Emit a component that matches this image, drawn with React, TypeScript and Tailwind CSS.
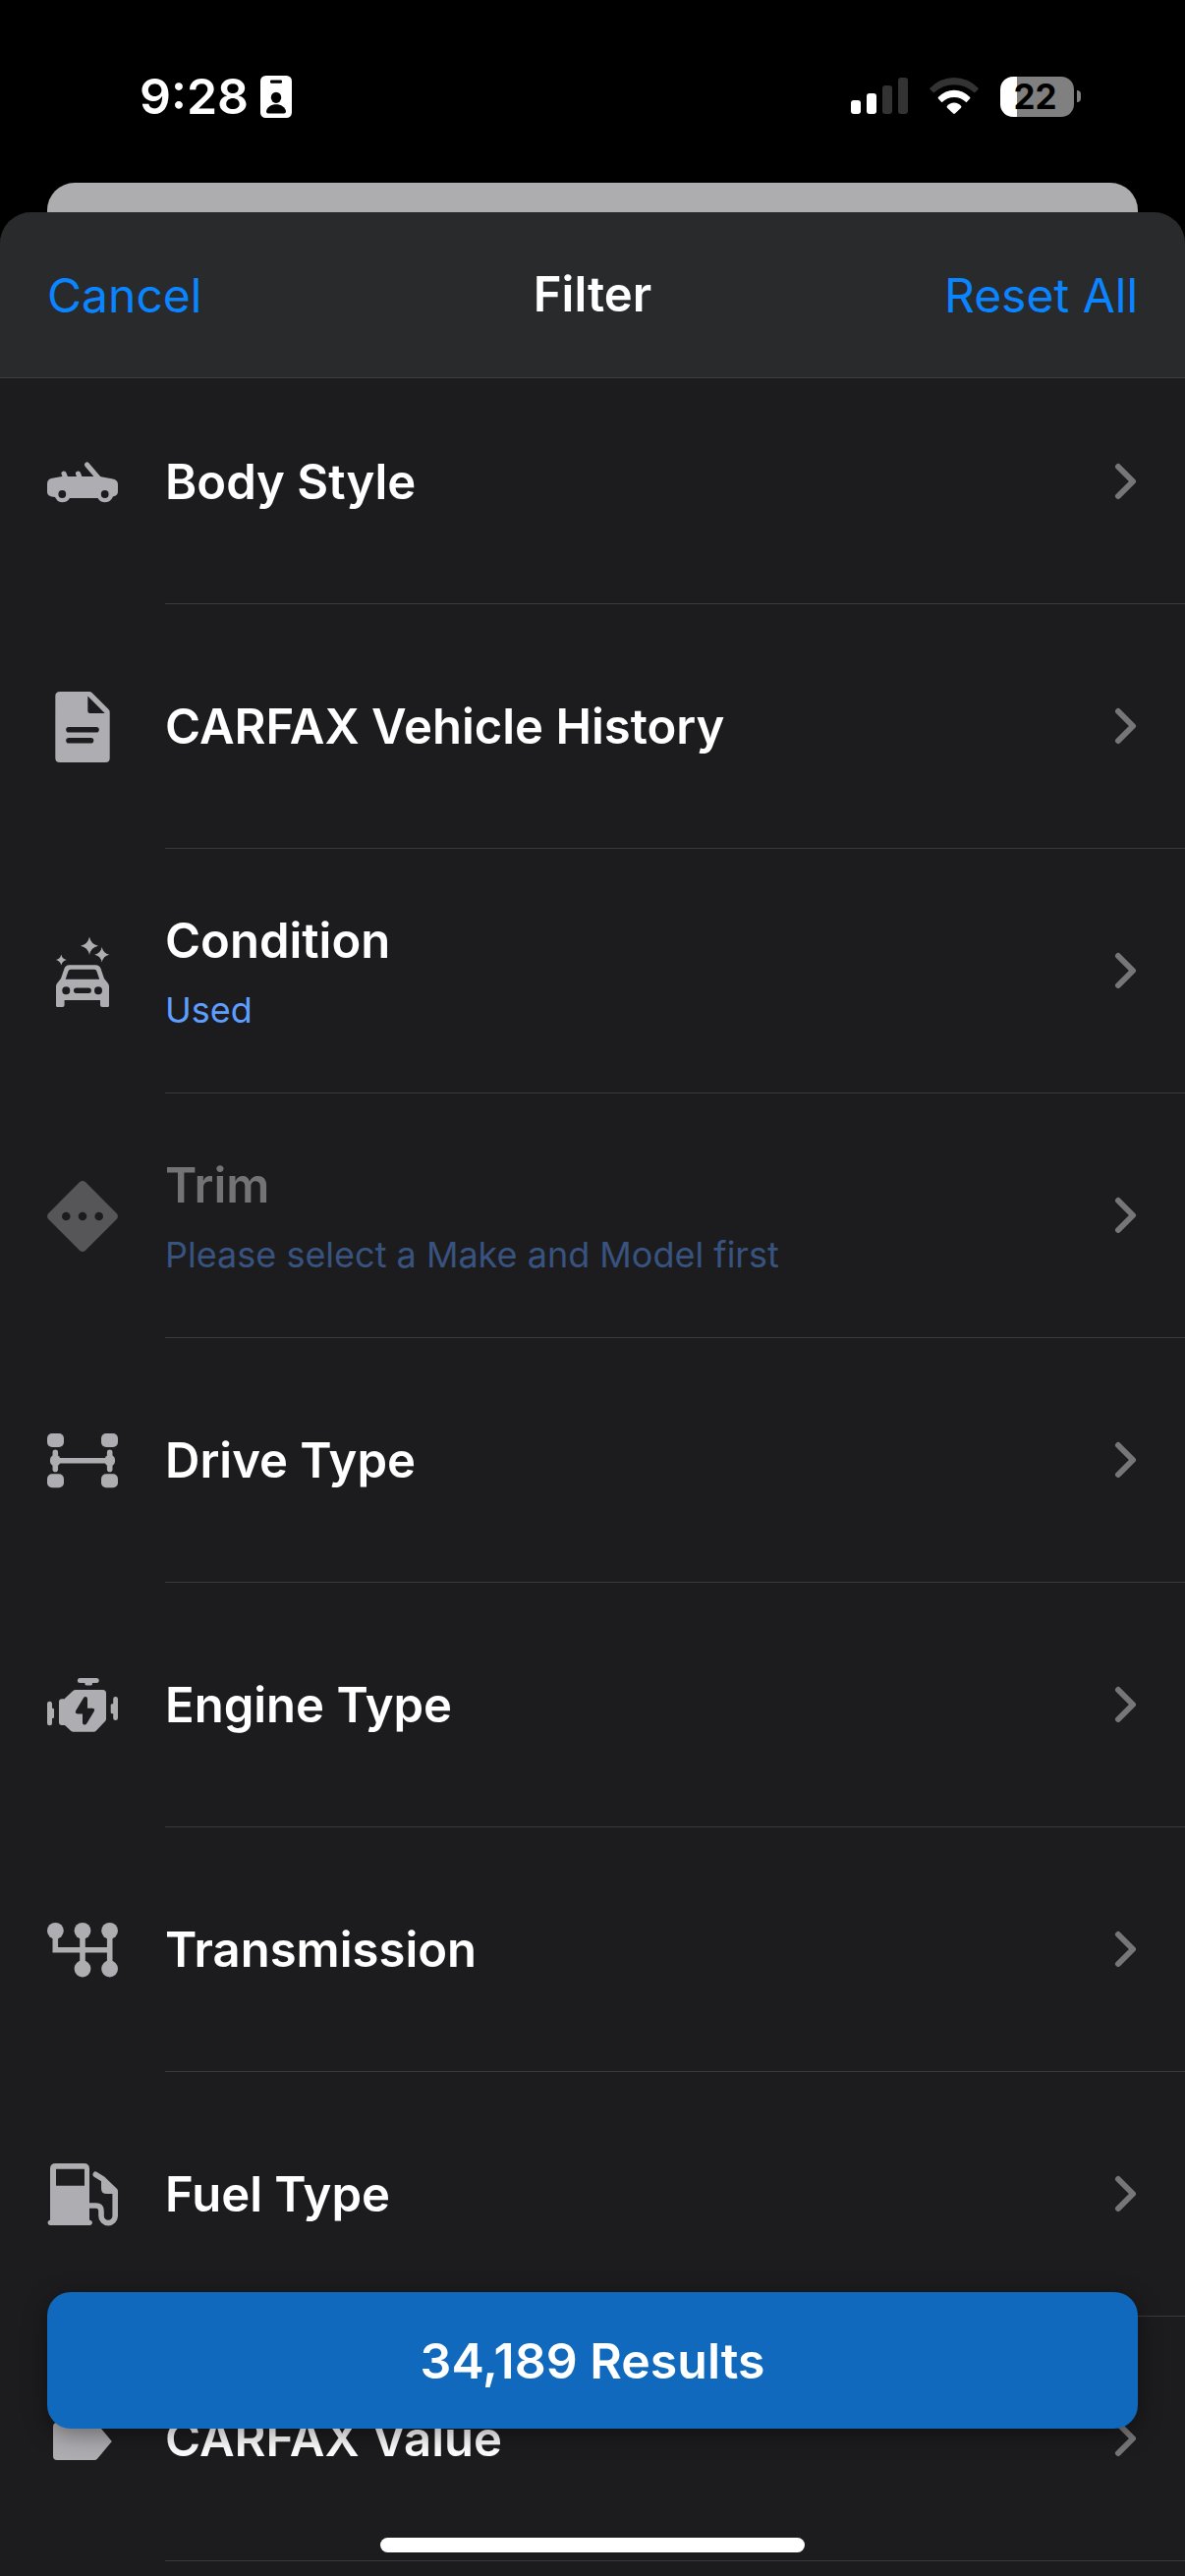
import type { ReactNode } from "react";

function RowIcon({ children }: { children: ReactNode }) {
  return (
    <svg viewBox="0 0 72 72" className="size-18 shrink-0" fill="currentColor" aria-hidden="true">
      {children}
    </svg>
  );
}

const HOLE = "#1c1c1e";

function ConvertibleIcon() {
  return (
    <RowIcon>
      <path d="M0 37.5Q0 33 4 32Q9 30.8 15 30H53.5L67 32.5Q72 33.8 72 38V45.5Q72 49.5 67 50.5Q64.5 56.2 58.7 56.2Q54 56.2 51.5 52H23Q20.5 56.2 15.3 56.2Q10.5 56.2 8 51Q0 50.5 0 46Z" />
      <path d="M17 27L19 32M31.5 27L33.5 32M40.5 18L52.5 32" fill="none" stroke="currentColor" strokeWidth="5" strokeLinecap="round" />
      <circle cx="15.3" cy="48" r="3.9" fill={HOLE} />
      <circle cx="58.7" cy="48" r="3.9" fill={HOLE} />
    </RowIcon>
  );
}

function DocumentIcon() {
  return (
    <RowIcon>
      <path d="M13 0H43Q44.5 0 45.5 1L62.5 18Q63.7 19.2 63.7 21V67.5Q63.7 72 59.2 72H13Q8.3 72 8.3 67.5V4.5Q8.3 0 13 0Z" />
      <path d="M41.3 4.5L58.7 22H43.5Q41.3 22 41.3 19.8Z" fill={HOLE} />
      <path d="M22 38.7H50M22 49.8H44.5" stroke={HOLE} strokeWidth="5.6" strokeLinecap="round" />
    </RowIcon>
  );
}

function CleanCarIcon() {
  return (
    <RowIcon>
      <path
        fillRule="evenodd"
        d="M9 51Q9 49.5 10 48L14 43L17.5 32.8Q18.8 29.3 22.5 29.3H49.5Q53.2 29.3 54.5 32.8L58 43L62 48Q63 49.5 63 51V70.5Q63 72 61.5 72H56Q54 72 54 70V65H17.6V70Q17.6 72 15.6 72H10.5Q9 72 9 70.5ZM18.7 43.7H53.2L50.5 35.8Q50 33.8 48 33.8H24Q22 33.8 21.4 35.8ZM19.3 51.3A4 4 0 1 0 19.3 59.3A4 4 0 1 0 19.3 51.3ZM52 51.3A4 4 0 1 0 52 59.3A4 4 0 1 0 52 51.3ZM29.7 52.6A2.7 2.7 0 0 0 29.7 58H42.2A2.7 2.7 0 0 0 42.2 52.6Z"
      />
      <path d="M43 .5Q44.5 8.2 52 9.7Q44.5 11.2 43 19Q41.5 11.2 34 9.7Q41.5 8.2 43 .5ZM55.7 11Q57 17.4 63.2 18.7Q57 20 55.7 26.5Q54.4 20 48.2 18.7Q54.4 17.4 55.7 11ZM14.3 18.5Q15.3 23 19.8 24Q15.3 25 14.3 29.5Q13.3 25 9 24Q13.3 23 14.3 18.5Z" />
    </RowIcon>
  );
}

function TrimIcon() {
  return (
    <RowIcon>
      <path d="M33 1.3Q36 -1.2 39 1.3L70.7 33Q73.2 36 70.7 39L39 70.7Q36 73.2 33 70.7L1.3 39Q-1.2 36 1.3 33Z" />
      <g fill={HOLE}>
        <circle cx="19.3" cy="36" r="4.3" />
        <circle cx="36" cy="36" r="4.3" />
        <circle cx="52.7" cy="36" r="4.3" />
      </g>
    </RowIcon>
  );
}

function DriveIcon() {
  return (
    <RowIcon>
      <rect x="0" y="8" width="17" height="14" rx="5" />
      <rect x="55" y="8" width="17" height="14" rx="5" />
      <rect x="0" y="49.3" width="17" height="14" rx="5" />
      <rect x="55" y="49.3" width="17" height="14" rx="5" />
      <path d="M8.3 27.4V44.4M63.7 27.4V44.4M8 35.7H64" stroke="currentColor" strokeWidth="5.6" strokeLinecap="round" />
      <rect x="3" y="30.3" width="10.5" height="10.8" rx="4.5" />
      <rect x="58.5" y="30.3" width="10.5" height="10.8" rx="4.5" />
    </RowIcon>
  );
}

function EngineIcon() {
  return (
    <RowIcon>
      <path d="M33.4 8H50.2A2.5 2.5 0 0 1 50.2 13H46V14Q46 15.4 44.6 15.4H39.8Q38.4 15.4 38.4 14V13H33.4A2.5 2.5 0 0 1 33.4 8Z" />
      <path d="M29 20H56.5Q60 20 60 23.5V49.5Q60 51 59 52L50 61.5Q48.8 62.8 47 62.8H27Q25 62.8 23.8 61.6L18 56H15Q12 56 12 53V32.3Q12 29.3 15 29.3H17.5L26 21.2Q27.3 20 29 20Z" />
      <path d="M0 34.3A2.4 2.4 0 0 1 5 34.3V38.7H5.6Q7 38.7 7 40V47.7Q7 49 5.6 49H5V53.7A2.4 2.4 0 0 1 0 53.7ZM72 29.3A2.4 2.4 0 0 0 67.2 29.3V34.3H66Q64.7 34.3 64.7 35.6V43Q64.7 44.3 66 44.3H67.2V48.7A2.4 2.4 0 0 0 72 48.7Z" />
      <path d="M37 28.2C38.2 26.2 41 26.8 41 29.3V38.7H45.8Q49.2 39 47.7 42L40.3 54.3C39 56.5 36 55.8 36 53.3V44.5H31Q27.8 44 29.3 41Z" fill={HOLE} />
    </RowIcon>
  );
}

function TransmissionIcon() {
  return (
    <RowIcon>
      <path d="M8.3 16V35.7H63.7M36 16V55M63.7 16V55" fill="none" stroke="currentColor" strokeWidth="5.6" />
      <circle cx="8.4" cy="16.3" r="8.4" />
      <circle cx="36" cy="16.3" r="8.4" />
      <circle cx="63.6" cy="16.3" r="8.4" />
      <circle cx="36" cy="55" r="8.4" />
      <circle cx="63.6" cy="55" r="8.4" />
    </RowIcon>
  );
}

function FuelIcon() {
  return (
    <RowIcon>
      <path
        fillRule="evenodd"
        d="M8.5 4H37.5Q43 4 43 9.5V61.7H43.8A2.7 2.7 0 0 1 43.8 67H2.7A2.7 2.7 0 0 1 2.7 61.7H3V9.5Q3 4 8.5 4ZM9 9.8V26.8H38V9.8Z"
      />
      <path d="M43 47H49.5Q55 47 55 52.5V57.5A7.1 7.1 0 0 0 69.2 57.5V32L57 20.2L49.3 15.3" fill="none" stroke="currentColor" strokeWidth="5.6" strokeLinecap="round" strokeLinejoin="round" />
      <path d="M55 18V29.5Q55 35 60.5 35H69V31L58 19Z" />
    </RowIcon>
  );
}

function TagIcon() {
  return (
    <RowIcon>
      <path d="M10 19H48Q50 19 51 20.2L65.8 38L51 55.8Q50 57 48 57H10Q6 57 6 53V23Q6 19 10 19Z" />
    </RowIcon>
  );
}

function Chevron() {
  return (
    <svg viewBox="0 0 24 40" className="h-10 w-6 shrink-0 text-[#767678]" fill="none" aria-hidden="true">
      <path d="M4 5L19 20L4 35" stroke="currentColor" strokeWidth="6" strokeLinecap="round" strokeLinejoin="round" />
    </svg>
  );
}

type Filter = { title: string; detail?: string; disabled?: boolean; icon: ReactNode };

const filters: Filter[] = [
  { title: "Body Style", icon: <ConvertibleIcon /> },
  { title: "CARFAX Vehicle History", icon: <DocumentIcon /> },
  { title: "Condition", detail: "Used", icon: <CleanCarIcon /> },
  { title: "Trim", detail: "Please select a Make and Model first", disabled: true, icon: <TrimIcon /> },
  { title: "Drive Type", icon: <DriveIcon /> },
  { title: "Engine Type", icon: <EngineIcon /> },
  { title: "Transmission", icon: <TransmissionIcon /> },
  { title: "Fuel Type", icon: <FuelIcon /> },
  { title: "CARFAX Value", icon: <TagIcon /> },
];

function FilterRow({ title, detail, disabled, icon }: Filter) {
  return (
    <li>
      <button type="button" disabled={disabled} className="flex w-full items-center gap-12 pl-12 text-left">
        <span className={disabled ? "text-[#565658]" : "text-[#aeaeb2]"}>{icon}</span>
        <span className="flex h-[249px] min-w-0 flex-1 items-center justify-between border-b border-[#3a3a3c] pr-12">
          <span className={detail ? "flex flex-col gap-2.5 pt-2.5" : "flex flex-col pt-0.5"}>
            <span className={disabled ? "text-[49px] leading-[60px] font-semibold text-[#737375]" : "text-[49px] leading-[60px] font-semibold text-white"}>
              {title}
            </span>
            {detail && (
              <span className={disabled ? "text-[36px] leading-[60px] text-[#38537f]" : "text-[36px] leading-[60px] text-[#5e9eff]"}>{detail}</span>
            )}
          </span>
          <Chevron />
        </span>
      </button>
    </li>
  );
}

function StatusBar() {
  return (
    <div className="flex h-[186px] items-start justify-between pt-[68px] pr-[106px] pl-[142px]">
      <div className="flex h-15 items-center gap-3">
        <span className="text-[50px] leading-[60px] font-semibold text-white">9:28</span>
        <svg viewBox="0 0 32 43" className="h-[43px] w-8" aria-hidden="true">
          <rect width="32" height="43" rx="5.5" fill="#fff" />
          <rect x="10" y="4.6" width="12" height="3.2" rx="1.2" />
          <ellipse cx="16" cy="22.3" rx="5.2" ry="5.6" />
          <path d="M6 36.5C6.600 32 11 29.300 16 29.300S25.400 32 26 36.500Q26 38.500 24 38.500H8Q6 38.500 6 36.500Z" />
        </svg>
      </div>
      <div className="flex h-15 items-center gap-[22px]">
        <svg viewBox="0 0 58 38" className="h-[38px] w-[58px]" aria-hidden="true">
          <rect x="0" y="23" width="10" height="14" rx="3" fill="#fff" />
          <rect x="16" y="16" width="10" height="21" rx="3" fill="#fff" />
          <rect x="32" y="8" width="10" height="29" rx="3" fill="#333" />
          <rect x="48" y="0" width="10" height="37" rx="3" fill="#333" />
        </svg>
        <svg viewBox="0 0 50 38" className="h-[38px] w-[50px]" aria-hidden="true">
          <path d="M.3 10.800Q11 0 25 0T49.700 10.800Q50 11.500 49.500 12L45.800 15.600Q36.500 7.200 25 7.200T4.200 15.600L.5 12Q0 11.500 .3 10.800Z" fill="#333" />
          <path d="M8.800 20Q16 12.700 25 12.700T41.200 20Q41.800 20.800 41 21.600L37.500 25.200Q32 20 25 20T12.500 25.200L9 21.600Q8.200 20.800 8.800 20Z" fill="#fff" />
          <path d="M17.800 29Q20.500 25.500 25 25.500T32.200 29Q32.800 29.800 32 30.700L26 36.600Q25 37.500 24 36.600L18 30.700Q17.200 29.800 17.800 29Z" fill="#fff" />
        </svg>
        <div className="flex items-center gap-[3px]">
          <div className="flex h-[41px] w-[75px] items-center justify-center rounded-[13px] bg-linear-to-r from-white from-[23%] to-[#808080] to-[23%] pr-1">
            <span className="text-[35px] leading-10 font-bold text-black">22</span>
          </div>
          <div className="h-3 w-1 rounded-r-full bg-[#808080]" />
        </div>
      </div>
    </div>
  );
}

export default function App() {
  return (
    <div className="flex min-h-screen flex-col overflow-hidden bg-black font-['Inter','Liberation_Sans',sans-serif]">
      <StatusBar />
      <div className="mx-12 h-[30px] rounded-t-[28px] bg-[#adadaf]" />

      <main className="flex flex-1 flex-col overflow-hidden rounded-t-[32px] bg-[#1c1c1e]">
        <header className="relative z-10 grid h-[169px] grid-cols-3 items-center border-b border-[#3d3d3f] bg-[#292a2b] px-12 text-[49px] leading-[60px]">
          <button type="button" className="justify-self-start pt-0.5 text-[48px] text-[#0a84ff]">
            Cancel
          </button>
          <h1 className="justify-self-center font-semibold text-white">Filter</h1>
          <button type="button" className="justify-self-end pt-0.5 text-[48px] whitespace-nowrap text-[#0a84ff]">
            Reset All
          </button>
        </header>
        <ul className="-mt-[19px] pb-3">
          {filters.map((filter) => (
            <FilterRow key={filter.title} {...filter} />
          ))}
        </ul>
      </main>

      <div className="fixed inset-x-0 bottom-0 z-20 flex flex-col items-center px-12 pb-6">
        <button
          type="button"
          className="h-[139px] w-full rounded-[24px] bg-[#1069bc] text-[50px] leading-[60px] font-semibold text-white shadow-[0_6px_24px_rgba(0,0,0,0.4)]"
        >
          34,189 Results
        </button>
        <div className="mt-[111px] h-[15px] w-[432px] rounded-full bg-white" />
      </div>
    </div>
  );
}
